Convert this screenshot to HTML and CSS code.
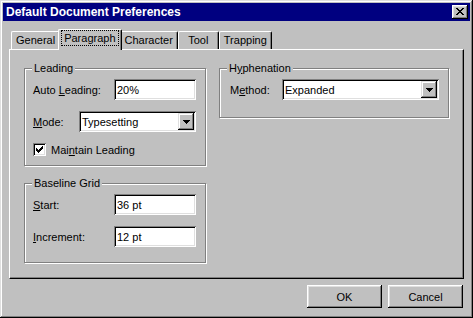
FILE: index.html
```html
<!DOCTYPE html>
<html>
	<head>
		<title>Default Document Preferences</title>
		<link rel="stylesheet" href="styles.css">
	</head>
	<body>
		<div class="window">
			<div class="titlebar">
				<span class="title">Default Document Preferences</span>
				<span class="close-btn">
					<svg width="8" height="7" viewBox="0 0 8 7" shape-rendering="crispEdges"><path d="M0 0h2v1h-2z M6 0h2v1h-2z M1 1h2v1h-2z M5 1h2v1h-2z M2 2h4v1h-4z M3 3h2v1h-2z M2 4h4v1h-4z M1 5h2v1h-2z M5 5h2v1h-2z M0 6h2v1h-2z M6 6h2v1h-2z" fill="#000"/></svg>
				</span>
			</div>

			<div class="tabs">
				<div class="tab">General</div>
				<div class="tab active"><span class="focus">Paragraph</span></div>
				<div class="tab">Character</div>
				<div class="tab">Tool</div>
				<div class="tab">Trapping</div>
			</div>

			<div class="panel">
				<div class="column">
					<div class="group leading">
						<span class="group-title">Leading</span>
						<div class="row">
							<label>Auto <u>L</u>eading:</label>
							<input class="field" type="text" value="20%">
						</div>
						<div class="row">
							<label><u>M</u>ode:</label>
							<div class="combo mode">
								<span class="combo-text">Typesetting</span>
								<span class="combo-btn"><svg width="7" height="4" viewBox="0 0 7 4" shape-rendering="crispEdges"><path d="M0 0H7V1H6V2H5V3H4V4H3V3H2V2H1V1H0Z" fill="#000"/></svg></span>
							</div>
						</div>
						<div class="check-row">
							<span class="checkbox"><svg width="7" height="7" viewBox="0 0 7 7" shape-rendering="crispEdges"><path d="M0 2h1v1h1v1h1v-1h1v-1h1v-1h1v-1h1v3h-1v1h-1v1h-1v1h-1v1h-1v-1h-1v-1h-1v-1h-1z" fill="#000"/></svg></span>
							<label>Mai<u>n</u>tain Leading</label>
						</div>
					</div>

					<div class="group baseline">
						<span class="group-title">Baseline Grid</span>
						<div class="row">
							<label><u>S</u>tart:</label>
							<input class="field" type="text" value="36 pt">
						</div>
						<div class="row">
							<label><u>I</u>ncrement:</label>
							<input class="field" type="text" value="12 pt">
						</div>
					</div>
				</div>

				<div class="group hyphen">
					<span class="group-title">H<u>y</u>phenation</span>
					<div class="row">
						<label>M<u>e</u>thod:</label>
						<div class="combo method">
							<span class="combo-text">Expanded</span>
							<span class="combo-btn"><svg width="7" height="4" viewBox="0 0 7 4" shape-rendering="crispEdges"><path d="M0 0H7V1H6V2H5V3H4V4H3V3H2V2H1V1H0Z" fill="#000"/></svg></span>
						</div>
					</div>
				</div>
			</div>

			<div class="buttons">
				<button class="btn">OK</button>
				<button class="btn">Cancel</button>
			</div>
		</div>
	</body>
</html>
```

FILE: styles.css
```css
* {
	box-sizing: border-box;
}

body {
	margin: 0;
	padding: 0;
	font-family: "Liberation Sans", Arial, sans-serif;
	font-size: 11px;
	color: #000;
	background-color: #c0c0c0;
}

.window {
	width: 473px;
	height: 318px;
	padding: 3px;
	background-color: #c0c0c0;
	box-shadow: inset -1px -1px #000, inset 1px 1px #dfdfdf, inset -2px -2px #808080, inset 2px 2px #fff;
	display: flex;
	flex-direction: column;
}

.titlebar {
	height: 18px;
	background-color: #000080;
	color: #fff;
	display: flex;
	align-items: center;
	justify-content: space-between;
	padding: 0 2px 0 3px;
}

.title {
	font-weight: bold;
	font-size: 12px;
}

.close-btn {
	width: 16px;
	height: 14px;
	background-color: #c0c0c0;
	box-shadow: inset -1px -1px #000, inset 1px 1px #fff, inset -2px -2px #808080, inset 2px 2px #dfdfdf;
	display: flex;
	align-items: center;
	justify-content: center;
	padding-bottom: 1px;
}

/* tab strip */
.tabs {
	display: flex;
	align-items: flex-end;
	height: 20px;
	margin: 8px 0 0 8px;
	position: relative;
	z-index: 1;
}

.tab {
	height: 18px;
	min-width: 41px;
	padding: 0 4px;
	text-align: center;
	line-height: 17px;
	background-color: #c0c0c0;
	border-top: 1px solid #fff;
	border-left: 1px solid #fff;
	border-right: 1px solid #000;
	border-radius: 2px 2px 0 0;
	box-shadow: inset -1px 0 #808080;
}

.tab.active {
	height: 21px;
	margin: 0 -2px -1px -2px;
	padding: 0 4px;
	line-height: 17px;
	position: relative;
}

.focus {
	outline: 1px dotted #000;
	outline-offset: 1px;
	padding: 0 1px;
}

.panel {
	margin-left: 6px;
	width: 455px;
	height: 230px;
	border-top: 1px solid #fff;
	border-left: 1px solid #fff;
	border-right: 1px solid #000;
	border-bottom: 1px solid #000;
	box-shadow: inset -1px -1px #808080;
	padding: 18px 14px 0 14px;
	display: flex;
	align-items: flex-start;
	gap: 13px;
}

.column {
	display: flex;
	flex-direction: column;
	gap: 17px;
}

/* etched group box */
.group {
	position: relative;
	border: 1px solid #808080;
	box-shadow: inset 1px 1px #fff, 1px 1px #fff;
	padding: 10px 9px 0 8px;
}

.group-title {
	position: absolute;
	top: -7px;
	left: 7px;
	padding: 0 2px;
	line-height: 13px;
	background-color: #c0c0c0;
}

.leading {
	width: 182px;
	height: 98px;
}

.baseline {
	width: 182px;
	height: 80px;
}

.hyphen {
	width: 230px;
	height: 50px;
	padding-left: 10px;
}

.row {
	display: flex;
	align-items: center;
	height: 21px;
	margin-bottom: 11px;
}

.field {
	margin-left: auto;
	width: 82px;
	height: 21px;
	border: none;
	outline: none;
	background-color: #fff;
	font: inherit;
	color: #000;
	padding: 0 0 0 3px;
	box-shadow: inset 1px 1px #808080, inset -1px -1px #fff, inset 2px 2px #000, inset -2px -2px #dfdfdf;
}

.combo {
	margin-left: auto;
	height: 21px;
	display: flex;
	align-items: center;
	padding: 2px;
	background-color: #fff;
	box-shadow: inset 1px 1px #808080, inset -1px -1px #fff, inset 2px 2px #000, inset -2px -2px #dfdfdf;
}

.mode {
	width: 117px;
}

.method {
	width: 157px;
}

.combo-text {
	flex: 1;
	padding-left: 1px;
}

.combo-btn {
	width: 16px;
	height: 17px;
	background-color: #c0c0c0;
	box-shadow: inset -1px -1px #000, inset 1px 1px #dfdfdf, inset -2px -2px #808080, inset 2px 2px #fff;
	display: flex;
	align-items: center;
	justify-content: center;
}

.check-row {
	display: flex;
	align-items: center;
	height: 13px;
	margin-top: 3px;
}

.checkbox {
	width: 13px;
	height: 13px;
	background-color: #fff;
	box-shadow: inset 1px 1px #808080, inset -1px -1px #fff, inset 2px 2px #000, inset -2px -2px #dfdfdf;
	display: flex;
	align-items: center;
	justify-content: center;
	margin-right: 5px;
}

.buttons {
	display: flex;
	justify-content: flex-end;
	gap: 6px;
	margin: 6px 7px 0 0;
}

.btn {
	width: 75px;
	height: 23px;
	border: none;
	background-color: #c0c0c0;
	font: inherit;
	color: #000;
	padding: 0;
	box-shadow: inset -1px -1px #000, inset 1px 1px #fff, inset -2px -2px #808080, inset 2px 2px #dfdfdf;
}
```
